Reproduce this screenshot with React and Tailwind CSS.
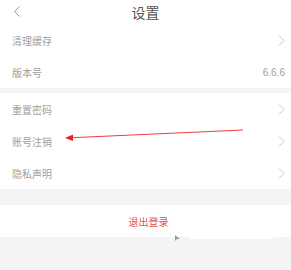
import React from 'react';

const font = { fontFamily: '"Noto Sans CJK SC", "Noto Sans", sans-serif' };

function Chevron() {
    return (
        <svg width="7" height="11" viewBox="0 0 7 11" fill="none" stroke="#c4c4c4" strokeWidth="1">
            <path d="M1 0.5 L6 5.5 L1 10.5" />
        </svg>
    );
}

function Row({ label, right }) {
    return (
        <div className="flex items-center justify-between pl-3 pr-[6px] h-[32px] bg-white">
            <span className="text-[10px] text-[#a0a0a0]">{label}</span>
            {right ?? <Chevron />}
        </div>
    );
}

export default function App() {
    return (
        <div className="relative w-[291px] h-[270px] bg-[#f4f4f4] overflow-hidden" style={font}>
            {/* Header */}
            <div className="relative h-[25px] bg-white flex items-center justify-center">
                <svg className="absolute left-[13px] top-[6px]" width="8" height="11" viewBox="0 0 8 11" fill="none" stroke="#9a9a9a" strokeWidth="1">
                    <path d="M6.5 0.5 L1.5 5.5 L6.5 10.5" />
                </svg>
                <span className="text-[14px] text-[#555]">设置</span>
            </div>

            <div className="bg-white">
                <div className="h-[31px] flex items-center justify-between pl-3 pr-[6px]">
                    <span className="text-[10px] text-[#a0a0a0]">清理缓存</span>
                    <Chevron />
                </div>
                <div className="h-[32px] flex items-center justify-between pl-3 pr-[6px]">
                    <span className="text-[10px] text-[#a0a0a0]">版本号</span>
                    <span className="text-[10px] text-[#a0a0a0]" style={{ fontFamily: '"Liberation Sans", sans-serif' }}>6.6.6</span>
                </div>
            </div>

            <div className="mt-[5px] bg-white">
                <Row label="重置密码" />
                <Row label="账号注销" />
                <Row label="隐私声明" />
            </div>

            <div className="mt-[16px] h-[32px] bg-white flex items-center justify-center">
                <span className="text-[10px] text-[#e0535c] pl-[6px]">退出登录</span>
            </div>

            {/* annotation arrow */}
            <svg className="absolute left-0 top-0 pointer-events-none" width="291" height="270">
                <line x1="243" y1="130" x2="72" y2="137.7" stroke="#f03c3c" strokeWidth="1" />
                <polygon points="65,138 73,134.5 73,141" fill="#f01e1e" />
            </svg>

            {/* cursor */}
            <svg className="absolute left-[174px] top-[235px]" width="7" height="7" viewBox="0 0 7 7">
                <polygon points="1,0 6,4 3,4 1,6" fill="#999" />
            </svg>
            <div className="absolute left-[190px] top-[237px] w-[83px] h-[2px] bg-white" />
        </div>
    );
}
